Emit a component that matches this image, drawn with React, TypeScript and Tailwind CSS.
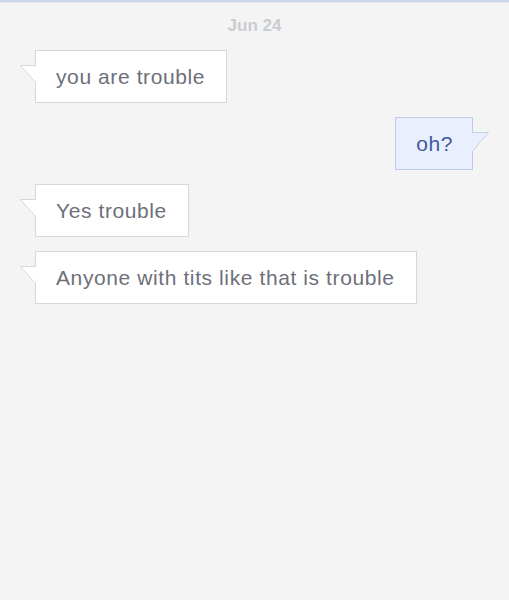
import React from "react";

type Msg = { text: string; me?: boolean };

const msgs: Msg[] = [
  { text: "you are trouble" },
  { text: "oh?", me: true },
  { text: "Yes trouble" },
  { text: "Anyone with tits like that is trouble" },
];

function Bubble({ m }: { m: Msg }) {
  if (m.me) {
    return (
      <div className="flex justify-end pr-[36px]">
        <div className="relative h-[53px] flex items-center pl-[20px] pr-[19px] bg-[#e9effc] border border-[#bccbe6] text-[#3f5b9c]">
          <span>{m.text}</span>
          <svg
            className="absolute right-[-17px] top-[14px]"
            width="17"
            height="21"
            viewBox="0 0 17 21"
          >
            <polygon points="0,0.5 16.5,0.5 0,20" fill="#e9effc" />
            <polyline points="0,0.5 16.5,0.5 0,20" fill="none" stroke="#c6d2ea" strokeWidth="1" />
          </svg>
        </div>
      </div>
    );
  }
  return (
    <div className="flex justify-start pl-[35px]">
      <div className="relative h-[53px] flex items-center pl-[20px] pr-[21px] bg-white border border-[#d4d7dc] text-[#6d707a]">
        <span>{m.text}</span>
        <svg
          className="absolute left-[-16px] top-[14px]"
          width="16"
          height="20"
          viewBox="0 0 16 20"
        >
          <polygon points="16,0.5 0.5,0.5 16,18" fill="#ffffff" />
          <polyline points="16,0.5 0.5,0.5 16,18" fill="none" stroke="#d4d7dc" strokeWidth="1" />
        </svg>
      </div>
    </div>
  );
}

export default function App() {
  return (
    <div
      className="w-[509px] h-[600px] bg-[#f4f4f4] overflow-hidden text-[21px] tracking-[0.6px]"
      style={{ fontFamily: '"Liberation Sans", Arial, sans-serif' }}
    >
      <div className="h-[3px] bg-[#c9d6ec] border-b border-[#dfe6f2]" />
      <div className="text-center text-[17px] font-bold text-[#c9ccd2] pt-[13px] leading-[20px] tracking-normal">
        Jun 24
      </div>
      <div className="flex flex-col gap-[14px] pt-[14px]">
        {msgs.map((m, i) => (
          <Bubble key={i} m={m} />
        ))}
      </div>
    </div>
  );
}
